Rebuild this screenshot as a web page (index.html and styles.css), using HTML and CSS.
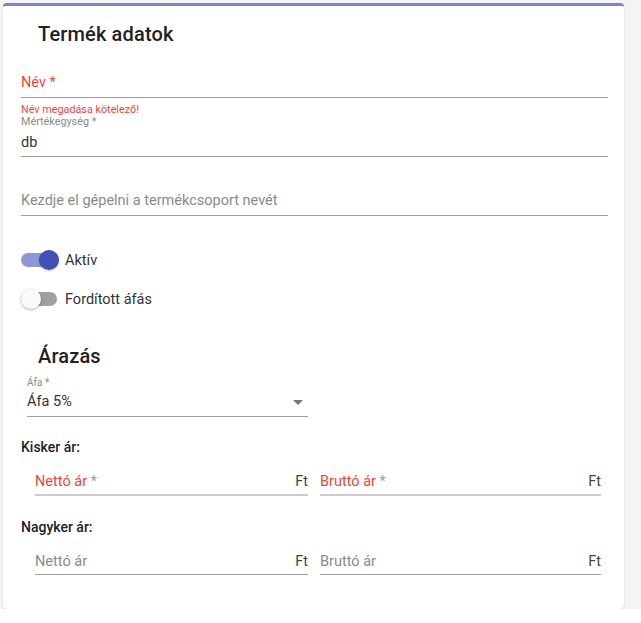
FILE: index.html
```html
<!DOCTYPE html>
<html lang="hu">
<head>
<meta charset="utf-8">
<title>Termék adatok</title>
<link rel="stylesheet" href="styles.css">
</head>
<body>
<div class="page">
  <div class="card">
    <h2 class="title">Termék adatok</h2>

    <div class="field field-error">
      <div class="field-line"><span class="label-red">Név *</span></div>
    </div>
    <div class="error-msg">Név megadása kötelező!</div>

    <div class="field field-filled">
      <div class="float-label">Mértékegység *</div>
      <div class="field-line"><span class="value">db</span></div>
    </div>

    <div class="field field-group">
      <div class="field-line"><span class="placeholder">Kezdje el gépelni a termékcsoport nevét</span></div>
    </div>

    <div class="toggle-row toggle-first">
      <span class="toggle on"><span class="track"></span><span class="thumb"></span></span>
      <span class="toggle-label">Aktív</span>
    </div>
    <div class="toggle-row toggle-second">
      <span class="toggle"><span class="track"></span><span class="thumb"></span></span>
      <span class="toggle-label">Fordított áfás</span>
    </div>

    <h2 class="title title-sub">Árazás</h2>

    <div class="field field-select">
      <div class="float-label">Áfa *</div>
      <div class="field-line"><span class="value">Áfa 5%</span><span class="arrow"></span></div>
    </div>

    <div class="price-heading">Kisker ár:</div>
    <div class="price-row price-row-req">
      <div class="price-field price-left">
        <span class="label-red">Nettó ár <span class="star">*</span></span><span class="suffix">Ft</span>
      </div>
      <div class="price-field price-right">
        <span class="label-red">Bruttó ár <span class="star">*</span></span><span class="suffix">Ft</span>
      </div>
    </div>

    <div class="price-heading price-heading-2">Nagyker ár:</div>
    <div class="price-row price-row-opt">
      <div class="price-field price-left">
        <span class="placeholder">Nettó ár</span><span class="suffix">Ft</span>
      </div>
      <div class="price-field price-right">
        <span class="placeholder">Bruttó ár</span><span class="suffix">Ft</span>
      </div>
    </div>
  </div>
</div>
</body>
</html>
```

FILE: styles.css
```css
html, body {
  margin: 0;
  padding: 0;
  background: #ffffff;
}
body {
  font-family: Roboto, "Liberation Sans", Arial, sans-serif;
  color: rgba(0, 0, 0, 0.87);
  width: 641px;
}
.page {
  background: #f4f4f4;
  padding: 3px 17px 0 3px;
}
.card {
  background: #ffffff;
  border-top: 3px solid #7b82d3;
  border-radius: 4px;
  box-shadow: 0 1px 2px rgba(0, 0, 0, 0.12), 0 0 1px rgba(0, 0, 0, 0.1);
  padding: 0 16px 34px 18px;
  display: flex;
  flex-direction: column;
}
.title {
  margin: 16px 0 0 17px;
  font-size: 20px;
  line-height: 24px;
  font-weight: 500;
  color: #212121;
  letter-spacing: 0.15px;
}
.title-sub {
  margin-top: 35px;
}
.field-line {
  display: flex;
  align-items: center;
  border-bottom: 1px solid #9e9e9e;
  font-size: 14.5px;
  line-height: 18px;
}
.field-error {
  margin-top: 28px;
}
.field-error .field-line {
  border-bottom: 1px solid #f77a7a;
  padding-bottom: 5px;
}
.label-red {
  color: #f44336;
}
.star {
  color: #9a9a9a;
}
.field-error .star { color: #f44336; }
.error-msg {
  margin-top: 6px;
  font-size: 10.8px;
  line-height: 12px;
  color: #f44336;
}
.float-label {
  font-size: 10.8px;
  line-height: 12px;
  color: #8a8a8a;
}
.field-filled .field-line {
  margin-top: 6px;
  padding-bottom: 4px;
}
.value {
  color: #333333;
  flex: 1;
}
.placeholder {
  color: #8a8a8a;
  flex: 1;
}
.field-group {
  margin-top: 35px;
}
.field-group .field-line {
  padding-bottom: 5px;
}
.toggle-row {
  display: flex;
  align-items: center;
  height: 20px;
}
.toggle-first { margin-top: 34px; }
.toggle-second { margin-top: 19px; }
.toggle {
  position: relative;
  width: 36px;
  height: 20px;
  flex: none;
}
.track {
  position: absolute;
  left: 0;
  top: 3px;
  width: 36px;
  height: 14px;
  border-radius: 7px;
  background: #a0a0a0;
}
.thumb {
  position: absolute;
  left: 0;
  top: 0;
  width: 20px;
  height: 20px;
  border-radius: 50%;
  background: #fafafa;
  box-shadow: 0 1px 3px rgba(0, 0, 0, 0.3);
}
.toggle.on .track {
  background: #8f97d6;
}
.toggle.on .thumb {
  left: 18px;
  background: #3f51b5;
  box-shadow: 0 1px 2px rgba(0, 0, 0, 0.2);
}
.toggle-label {
  margin-left: 8px;
  font-size: 14.5px;
  color: #333333;
}
.field-select {
  margin: 9px 0 0 6px;
  width: 281px;
}
.field-select .float-label {
  font-size: 10px;
}
.field-select .field-line {
  margin-top: 4px;
  padding-bottom: 5px;
}
.arrow {
  width: 0;
  height: 0;
  border-left: 5px solid transparent;
  border-right: 5px solid transparent;
  border-top: 5px solid #757575;
  margin-right: 5px;
}
.price-heading {
  margin-top: 22px;
  font-size: 14px;
  line-height: 16px;
  font-weight: 500;
  color: #222222;
}
.price-heading-2 {
  margin-top: 23px;
}
.price-row {
  display: flex;
  gap: 12px;
  margin: 18px 7px 0 14px;
}
.price-field {
  display: flex;
  align-items: center;
  font-size: 14.5px;
  line-height: 18px;
  padding-bottom: 3px;
}
.price-left { width: 273px; }
.price-right { flex: 1; }
.price-row-req .price-field {
  border-bottom: 2px solid #cccccc;
}
.price-row-opt .price-field {
  border-bottom: 1px solid #9e9e9e;
}
.price-field .label-red { flex: 1; }
.suffix {
  color: #444444;
}
```
